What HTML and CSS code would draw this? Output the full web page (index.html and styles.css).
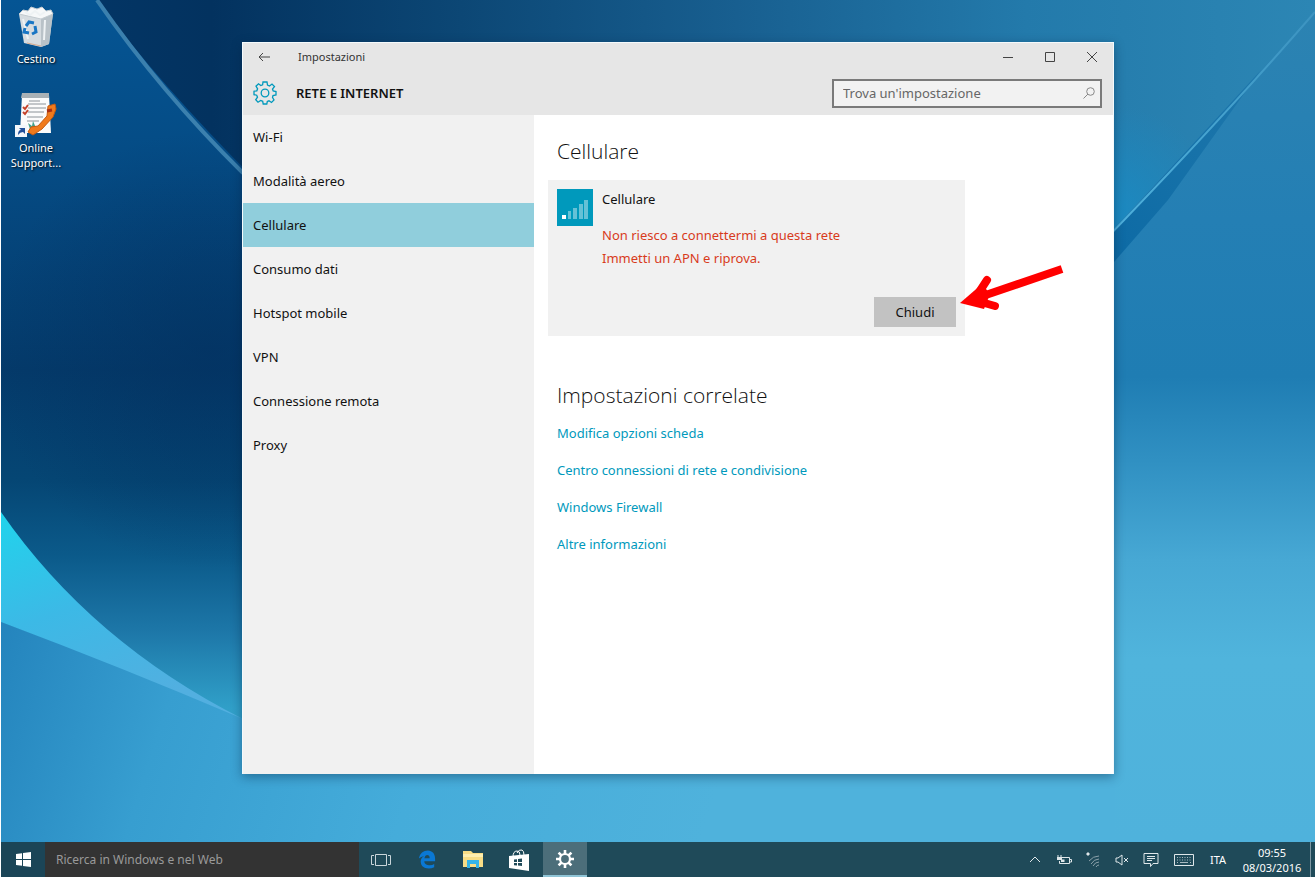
FILE: index.html
```html
<!DOCTYPE html>
<html lang="it">
<head>
<meta charset="utf-8">
<title>Impostazioni - Rete e Internet</title>
<meta name="viewport" content="width=device-width, initial-scale=1">
<link rel="stylesheet" href="styles.css">
</head>
<body>
<main class="desktop">
  <svg class="wallpaper" viewBox="0 0 1314 842" preserveAspectRatio="none" aria-hidden="true">
    <defs>
      <linearGradient id="sky" x1="0" y1="0" x2="1" y2="0">
        <stop offset="0" stop-color="#03386a"/><stop offset=".16" stop-color="#03325f"/><stop offset=".35" stop-color="#0c4775"/><stop offset=".56" stop-color="#185f90"/><stop offset=".78" stop-color="#237aab"/><stop offset="1" stop-color="#2c86b4"/>
      </linearGradient>
      <linearGradient id="left" x1="0" y1="0" x2="0" y2="1">
        <stop offset="0" stop-color="#055594"/><stop offset=".2" stop-color="#054b84"/><stop offset=".44" stop-color="#043a6a"/><stop offset=".57" stop-color="#054674"/><stop offset=".66" stop-color="#0b5a8a"/><stop offset=".75" stop-color="#1d77a8"/><stop offset=".84" stop-color="#309fc8"/><stop offset="1" stop-color="#45b0d8"/>
      </linearGradient>
      <radialGradient id="shade" gradientUnits="userSpaceOnUse" cx="210" cy="350" r="220">
        <stop offset="0" stop-color="#03305f" stop-opacity=".6"/><stop offset="1" stop-color="#03305f" stop-opacity="0"/>
      </radialGradient>
      <radialGradient id="glow" gradientUnits="userSpaceOnUse" cx="1110" cy="215" r="110">
        <stop offset="0" stop-color="#1b8ac2"/><stop offset="1" stop-color="#1b8ac2" stop-opacity="0"/>
      </radialGradient>
      <linearGradient id="right" x1="0" y1="0" x2="0" y2="1">
        <stop offset="0" stop-color="#2c83b2"/><stop offset=".25" stop-color="#247fb4"/><stop offset=".44" stop-color="#1f7db3"/><stop offset=".54" stop-color="#3090c2"/><stop offset=".66" stop-color="#47a8d4"/><stop offset=".78" stop-color="#50b4dc"/><stop offset="1" stop-color="#4fb2dc"/>
      </linearGradient>
      <linearGradient id="wing" x1="0" y1="0" x2=".4" y2="1">
        <stop offset="0" stop-color="#20d4ec"/><stop offset=".5" stop-color="#3cb9e6"/><stop offset="1" stop-color="#52afe0"/>
      </linearGradient>
      <linearGradient id="floor" gradientUnits="userSpaceOnUse" x1="0" y1="622" x2="700" y2="842">
        <stop offset="0" stop-color="#2484bd"/><stop offset=".25" stop-color="#379ed0"/><stop offset=".6" stop-color="#45acda"/><stop offset="1" stop-color="#4fb2dc"/>
      </linearGradient>
      <linearGradient id="fold" x1="0" y1="1" x2="1" y2="0">
        <stop offset="0" stop-color="#0b69a4"/><stop offset="1" stop-color="#1f78ac"/>
      </linearGradient>
      <linearGradient id="glint" x1="0" y1="1" x2="1" y2="0">
        <stop offset="0" stop-color="#4fb2de"/><stop offset="1" stop-color="#3c93c0"/>
      </linearGradient>
    </defs>
    <path d="M0 0H1314V842H0Z" fill="url(#sky)"/>
    <path d="M1000 60H1270V330H1000Z" fill="url(#glow)"/>
    <path d="M96 0Q170 100 300 225V842H0V0Z" fill="url(#left)"/>
    <path d="M96 0Q170 100 300 225V570H0V0Z" fill="url(#shade)"/>
    <path d="M96 0Q160 92 242 173" fill="none" stroke="#3b80ae" stroke-width="4"/>
    <path d="M1314 12L1070 275V842H1314Z" fill="url(#right)"/>
    <path d="M1260 70L1100 244V277L1167 200Z" fill="url(#fold)"/>
    <path d="M1314 12Q1220 120 1100 244" fill="none" stroke="url(#glint)" stroke-width="2"/>
    <path d="M0 622Q120 665 242 719H1114V842H0Z" fill="url(#floor)"/>
    <path d="M0 512Q90 642 242 719Q120 667 0 622Z" fill="url(#wing)"/>
  </svg>

  <ul class="shortcuts">
    <li><button class="shortcut" type="button">
      <svg width="38" height="42" viewBox="0 0 38 42" aria-hidden="true">
        <path d="M2 8L36 7L32 38L24 41L7 37Z" fill="#d6dce0"/>
        <path d="M24 11L36 7L32 38L24 41Z" fill="#b9c2c8"/>
        <path d="M2 8L6 4L11 5L14 1L20 3L25 1L29 5L34 4L36 8L24 13Z" fill="#f6f8f9" stroke="#c3cbd0"/>
        <path d="M8 6L13 9L18 5L23 9L28 6M6 13L11 33M28 14L27 34" fill="none" stroke="#eef2f4" stroke-width="2"/>
        <path d="M10 37L24 40" stroke="#d6a98d" stroke-width="1"/>
        <g fill="none" stroke="#1976c4" stroke-width="3"><path d="M9 20L12 16L17 17"/><path d="M18 20L19 26L15 28"/><path d="M12 27L7 26L8 22"/></g>
      </svg>
      <span>Cestino</span></button></li>
    <li><button class="shortcut" type="button">
      <svg width="42" height="45" viewBox="0 0 42 45" aria-hidden="true">
        <path d="M7 3H34L36 41H5Z" fill="#fbfbfb"/><path d="M7 1H34V6H6Z" fill="#a9b1b6"/>
        <path d="M14 9H25M13 12H31M13 16H31M13 20H29M12 25H28M12 29H24" stroke="#8b9298"/>
        <path d="M8 15L10 17L13 13M8 20L10 22L13 18" fill="none" stroke="#c4432b" stroke-width="2"/>
        <path d="M15 37L13 31L17 34L18 29L21 36" fill="#45a08a"/>
        <path d="M33 14L40 12L41 17L38 25L27 37L18 43L13 40L16 35L23 34L32 24Z" fill="#f07a1c" stroke="#c55a10"/>
        <path d="M32 19L37 18" stroke="#a82f14" stroke-width="3"/>
        <path d="M0 33H12V45H0Z" fill="#f3f7fb"/><path d="M3 43Q3 38 6 38L4 36H10V42L8 40Q5 40 3 43Z" fill="#204f9a"/>
      </svg>
      <span>Online Support...</span></button></li>
  </ul>

  <section class="window" aria-label="Impostazioni">
    <header class="window-head">
      <div class="titlebar">
        <button class="back" type="button" aria-label="Indietro"><svg width="12" height="10" viewBox="0 0 12 10"><path d="M12 5H1M5 1L1 5L5 9"/></svg></button>
        <span class="title">Impostazioni</span>
        <div class="window-buttons">
          <button type="button" aria-label="Riduci a icona"><svg width="10" height="10" viewBox="0 0 10 10"><path d="M0 5.500H10"/></svg></button>
          <button type="button" aria-label="Ingrandisci"><svg width="10" height="10" viewBox="0 0 10 10"><path d="M.5.500H9.500V9.500H.5Z"/></svg></button>
          <button type="button" aria-label="Chiudi finestra"><svg width="10" height="10" viewBox="0 0 10 10"><path d="M0 0L10 10M10 0L0 10"/></svg></button>
        </div>
      </div>
      <div class="section-bar">
        <svg class="gear" width="24" height="24" viewBox="0 0 24 24" aria-hidden="true"><path d="M10 1H14L14.500 4L16.500 5L19 3L21.500 5.500L19.500 8L20.200 10L23 10.500V14L20 14.500L19.500 16.500L21 19L18.500 21.500L16 19.800L14.300 20.500L13.800 23H10.200L9.700 20.300L7.700 19.500L5 21.200L2.700 18.800L4.500 16.200L3.700 14.200L1 13.700V10.200L3.800 9.800L4.600 7.800L3 5.200L5.500 2.800L7.800 4.600L9.600 3.900Z"/><circle cx="12" cy="12" r="3.800"/></svg>
        <h1>RETE E INTERNET</h1>
        <div class="search">
          <input type="search" placeholder="Trova un'impostazione" aria-label="Trova un'impostazione">
          <svg width="12" height="12" viewBox="0 0 12 12" aria-hidden="true"><circle cx="7.500" cy="4.500" r="3.800"/><path d="M5 7L.5 11.500"/></svg>
        </div>
      </div>
    </header>
    <div class="window-body">
      <nav class="sidebar" aria-label="Rete e Internet">
        <a href="#wifi">Wi-Fi</a>
        <a href="#aereo">Modalità aereo</a>
        <a class="selected" href="#cellulare" aria-current="page">Cellulare</a>
        <a href="#dati">Consumo dati</a>
        <a href="#hotspot">Hotspot mobile</a>
        <a href="#vpn">VPN</a>
        <a href="#remota">Connessione remota</a>
        <a href="#proxy">Proxy</a>
      </nav>
      <div class="content">
        <h2>Cellulare</h2>
        <article class="network">
          <svg class="signal" width="36" height="37" viewBox="0 0 36 37" aria-hidden="true"><path d="M0 0H36V37H0Z" fill="#0099bc"/><path d="M5 26H9V30H5Z" fill="#fff"/><path d="M11 22H14V30H11ZM16 19H20V30H16ZM22 15H26V30H22ZM27 11H31V30H27Z" fill="#66c1d6"/></svg>
          <div class="network-info">
            <h3>Cellulare</h3>
            <p class="error">Non riesco a connettermi a questa rete<br>Immetti un APN e riprova.</p>
          </div>
          <button class="close" type="button">Chiudi</button>
          <svg class="pointer" width="104" height="50" viewBox="0 0 104 50" aria-hidden="true"><path d="M102 5L14 35" stroke="#f00" stroke-width="8"/><path d="M27 16L14 36L35 42" fill="none" stroke="#f00" stroke-width="8" stroke-linecap="round"/><path d="M0 39L22 20L30 30L24 45Z" fill="#f00"/></svg>
        </article>
        <h2>Impostazioni correlate</h2>
        <ul class="related">
          <li><a href="#scheda">Modifica opzioni scheda</a></li>
          <li><a href="#centro">Centro connessioni di rete e condivisione</a></li>
          <li><a href="#firewall">Windows Firewall</a></li>
          <li><a href="#altre">Altre informazioni</a></li>
        </ul>
      </div>
    </div>
  </section>
</main>

<footer class="taskbar">
  <button class="start" type="button" aria-label="Start"><svg width="15" height="15" viewBox="0 0 15 15"><path d="M0 2L6 1.200V7H0ZM7 1L15 0V7H7ZM0 8H6V13.800L0 13ZM7 8H15V15L7 14Z" fill="#fff"/></svg></button>
  <input class="task-search" type="text" placeholder="Ricerca in Windows e nel Web" aria-label="Ricerca in Windows e nel Web">
  <div class="apps">
    <button type="button" aria-label="Visualizzazione attività"><svg width="20" height="14" viewBox="0 0 20 14"><path d="M4.500 1.500H15.500V12.500H4.500ZM3 2.500H.5V11.500H3M17 2.500H19.500V11.500H17" fill="none" stroke="#c9d5da"/></svg></button>
    <button type="button" aria-label="Microsoft Edge"><svg width="18" height="19" viewBox="0 0 20 20"><path d="M1 9C2 3 6 0 11 0C16 0 19 4 19 9V12H7C7 15 10 16.500 13 16.500Q16 16.500 18 15V18.500Q15 20 12 20C6 20 3 17 3 12Q3 8 7 6Q3 6.500 1 9ZM7 8.500H13Q13 5 10 5Q8 5 7 8.500Z" fill="#0a78d4"/></svg></button>
    <button type="button" aria-label="Esplora file"><svg width="20" height="17" viewBox="0 0 20 17"><path d="M0 0H8L10 2H20V16H0Z" fill="#f8dd86"/><path d="M0 3H20V6H0Z" fill="#fdeeb0"/><path d="M4 9H16V17H13V13H7V17H4Z" fill="#35b4e8"/></svg></button>
    <button type="button" aria-label="Store"><svg width="20" height="22" viewBox="0 0 20 22"><path d="M0 7L20 5V22L0 19Z" fill="#fff"/><path d="M4 8Q4 2 8 2Q11 2 11 6M8 4Q10 0 13 1Q15 2 15 6" fill="none" stroke="#fff"/><path d="M5 10.500L8 10.200V13H5ZM9 10L13 9.600V13H9ZM5 14H8V16.500L5 16.200ZM9 14H13V17L9 16.600Z" fill="#1f4a59"/></svg></button>
    <button class="active" type="button" aria-label="Impostazioni"><svg width="18" height="18" viewBox="0 0 18 18"><circle cx="9" cy="9" r="5" fill="none" stroke="#fff" stroke-width="2.200"/><path d="M9 0V4M9 14V18M0 9H4M14 9H18M2.600 2.600L5.500 5.500M12.500 12.500L15.400 15.400M15.400 2.600L12.500 5.500M5.500 12.500L2.600 15.400" stroke="#fff" stroke-width="2.600"/></svg></button>
  </div>
  <div class="tray">
    <button type="button" aria-label="Mostra icone nascoste"><svg width="12" height="7" viewBox="0 0 12 7"><path d="M1 6L6 1L11 6"/></svg></button>
    <button type="button" aria-label="Batteria"><svg width="16" height="10" viewBox="0 0 16 10"><path d="M5 2.500H13.500V8.500H3.500V6M14 4.500H15.500V7H14M1 2.500H6M2 0V2M5 0V2"/><path d="M1 3H6V5H1ZM5 4.500H8.500V7H5Z" fill="#dfe7ea" stroke="none"/></svg></button>
    <button type="button" aria-label="Wi-Fi"><svg width="16" height="18" viewBox="0 0 16 18"><path d="M4 10Q8 5 14 5M6 13Q9 8 14 8M8 15Q10 11 14 11M11 16Q12 14 14 14" stroke="#8ca2ab"/><path d="M3 1V5M1 3H5M2 2L4 4M4 2L2 4"/></svg></button>
    <button type="button" aria-label="Volume"><svg width="14" height="12" viewBox="0 0 14 12"><path d="M1 4H3L7 1V11L3 8H1ZM9 4L13 8M13 4L9 8"/></svg></button>
    <button type="button" aria-label="Centro notifiche"><svg width="16" height="16" viewBox="0 0 16 16"><path d="M1 1.500H15V11.500H10L7.500 14.500V11.500H1ZM4 4.500H12M4 6.500H12M4 8.500H9"/></svg></button>
    <button class="keyboard" type="button" aria-label="Tastiera virtuale"><svg width="20" height="12" viewBox="0 0 20 12"><path d="M.5.500H19.500V11.500H.5Z"/><path d="M3 3.500H18M3 6H18" stroke-dasharray="1 1.500" stroke="#a9bac1"/><path d="M3 8.500H4M6 8.500H14M16 8.500H17" stroke="#a9bac1"/></svg></button>
    <button class="language" type="button">ITA</button>
    <button class="clock" type="button"><time datetime="2016-03-08T09:55">09:55<br>08/03/2016</time></button>
    <button class="show-desktop" type="button" aria-label="Mostra desktop"></button>
  </div>
</footer>
</body>
</html>
```

FILE: styles.css
```css
* { box-sizing: border-box; }

body {
  display: flex;
  flex-direction: column;
  min-height: 100vh;
  margin: 0;
  padding: 0 0 2px 1px;
  background: #fff;
  color: #111;
  font: 13px/20px "Noto Sans", "Open Sans", sans-serif;
}

button, input { font: inherit; color: inherit; margin: 0; }
button { display: flex; align-items: center; justify-content: center; padding: 0; border: 0; background: none; }
h1, h2, h3, p, ul { margin: 0; padding: 0; font-weight: 400; }
ul { list-style: none; }
a { color: inherit; text-decoration: none; }

/* Desktop */
.desktop { position: relative; display: flex; flex: 1; padding: 42px 201px 68px 0; }
.wallpaper { position: absolute; inset: 0; width: 100%; height: 100%; }

.shortcuts {
  position: relative;
  display: flex;
  flex-direction: column;
  flex: none;
  gap: 26px;
  width: 241px;
  margin-top: -36px;
}
.shortcut {
  flex-direction: column;
  gap: 3px;
  width: 70px;
  color: #fff;
  font-size: 11px;
  line-height: 15px;
  text-shadow: 1px 1px 2px #000;
}

/* Settings window */
.window {
  position: relative;
  display: flex;
  flex: 1;
  flex-direction: column;
  min-width: 0;
  border: 1px solid #f4fafc;
  border-width: 1px 1px 0 1px;
  background: #fff;
  box-shadow: 0 3px 10px rgba(0, 30, 60, .4);
}
.window-head { background: #e6e6e6; }
.titlebar { display: flex; align-items: center; height: 28px; padding-left: 9px; }
.titlebar svg { fill: none; stroke: #444; }
.back { width: 24px; height: 28px; }
.title { flex: 1; padding-left: 22px; color: #333; font-size: 11px; }
.window-buttons { display: flex; }
.window-buttons button { width: 42px; height: 28px; }

.section-bar { display: flex; align-items: center; height: 44px; padding: 0 11px 0 10px; }
.gear { fill: none; stroke: #0099bc; stroke-width: 1.3; }
.section-bar h1 { flex: 1; padding-left: 19px; font-size: 13px; font-weight: 600; }
.search {
  display: flex;
  align-items: center;
  width: 270px;
  height: 29px;
  padding: 0 5px 0 9px;
  border: 2px solid #7a7a7a;
  background: #f2f2f2;
}
.search input { flex: 1; min-width: 0; padding: 0; border: 0; outline: 0; background: none; }
.search input::placeholder { color: #666; opacity: 1; }
.search svg { fill: none; stroke: #888; }

.window-body { display: flex; flex: 1; }
.sidebar { flex: none; width: 291px; padding-bottom: 24px; background: #f1f1f1; }
.sidebar a { display: flex; align-items: center; height: 44px; padding: 0 10px; }
.sidebar .selected { background: #90cedc; }

.content { flex: 1; min-width: 0; padding: 20px 14px; }
.content h2 {
  padding-left: 9px;
  font-family: "Open Sans", "Noto Sans", sans-serif;
  font-size: 21px;
  font-weight: 300;
  line-height: 32px;
}
.network {
  position: relative;
  display: flex;
  align-items: flex-start;
  gap: 9px;
  max-width: 417px;
  min-height: 156px;
  margin: 13px 0 43px;
  padding: 9px;
  background: #f1f1f1;
}
.signal { flex: none; }
.network-info { flex: 1; }
.network h3 { font-size: 13px; }
.error { margin-top: 15px; color: #d83b1c; line-height: 23px; white-space: nowrap; }
.close { align-self: flex-end; width: 82px; height: 30px; background: #c2c2c2; }
.pointer { position: absolute; right: -99px; bottom: 22px; }
.related { display: flex; flex-direction: column; gap: 17px; padding: 12px 0 0 9px; color: #0099bc; }
.related li { line-height: 20px; }

/* Taskbar */
.taskbar { display: flex; height: 35px; background: #1f4a59; color: #fff; }
.start { width: 44px; background: #1b4557; }
.task-search { width: 314px; padding: 0 11px; border: 0; border-radius: 0; outline: 0; background: #333; font-size: 12px; }
.task-search::placeholder { color: #9a9a9a; opacity: 1; }
.apps { display: flex; flex: 1; gap: 2px; }
.apps button { width: 44px; }
.apps .active { border-bottom: 2px solid #8fc4d6; background: #4c6e7a; }
.tray { display: flex; font-size: 11px; line-height: 15px; }
.tray button { width: 29px; }
.tray svg { fill: none; stroke: #dfe7ea; }
.tray .keyboard { width: 37px; }
.tray .language { width: 32px; }
.tray .clock { width: 76px; text-align: center; }
.tray .show-desktop { width: 5px; border-left: 1px solid #7d98a3; }
```
